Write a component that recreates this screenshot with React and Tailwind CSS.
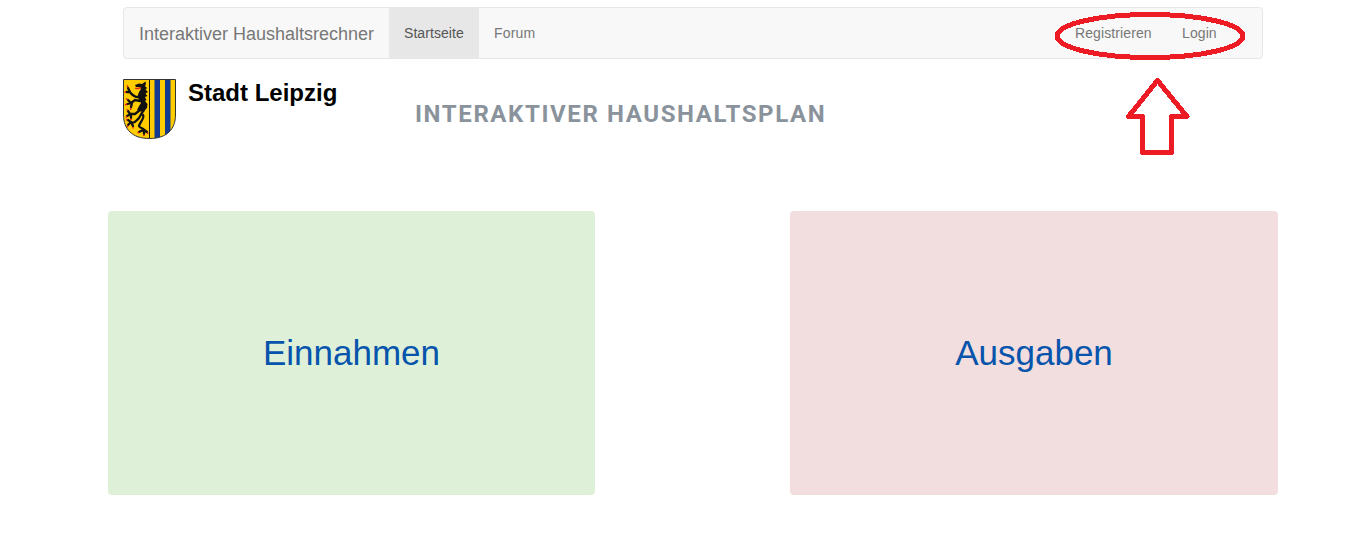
function CoatOfArms() {
  return (
    <svg className="h-[60px] w-[53px] shrink-0" viewBox="0 0 53 60">
      <defs>
        <clipPath id="shield">
          <path d="M.5 .5H52.5V36C52.5 50 44 59.500 26.500 59.500C9 59.500 .5 50 .5 36Z" />
        </clipPath>
      </defs>
      <g clipPath="url(#shield)">
        <rect width="53" height="60" fill="#fc0" />
        <path d="M31.500 0H37V60H31.500ZM42 0H47.500V60H42Z" fill="#123a91" />
        <path d="M26.500 0V60" stroke="#111" />
        <path
          d="M12 6L16 4.500L19 5L22.500 2.500L23 5L22 7L24 9L22.500 10.500L25 13L22.500 14.500L24.500 17L22 18L23.500 21L22 22L24.500 25L24 29L21 32L18 32.500L14 31L16 27L18 24L16 21L14.500 17L16 13L18 10L16.500 8L13 8Z"
          fill="#111"
        />
        <path
          d="M17 18C13 19 9 16 6 12M3.500 13L7 13M5 9L7 13M17 22L12 21L8 24M5 21L8 24M4.500 25L9 24M8 28L9 24M17 31L12 35L7 35M5 32L7 35M4 37L8 35M8 39L8 35M21 31C16 37 18 38 14 41C11 44 10 44 8 43M5 41L8 43M5 46L8 43M10 47L8 43M20 36C22 39 17 43 16 47C17 50 20 48 21 51M16 53L20 51M21 55L21 51M24 53L20 50"
          fill="none"
          stroke="#111"
          strokeWidth="2.300"
          strokeLinecap="round"
        />
        <path
          d="M12 9C14 10.500 16 9 18 8.500M5 8L4 6.500M3 13L1.500 13.500M4.500 20.500L3 19.500M4 25L2 26M8 29L7.500 31M5 31.500L3.500 30.500M4 37.500L2.500 38.500M8 39.500L8 41M4.500 41L3 40.500M5 46.500L4 48M10 48L10 49.500M16 53L14.500 54M21 55.500L21 57M24.500 53.500L25 55"
          fill="none"
          stroke="#e32a18"
          strokeWidth="1.500"
        />
      </g>
      <path
        d="M.5 .5H52.500V36C52.500 50 44 59.500 26.500 59.500C9 59.500 .5 50 .5 36Z"
        fill="none"
        stroke="#333"
      />
    </svg>
  );
}

function LoginHighlight() {
  return (
    <svg
      className="pointer-events-none absolute top-0 right-[14px] h-[152px] w-[196px]"
      viewBox="1052 8 196 152"
      fill="none"
      stroke="#ed1c24"
      strokeWidth="5"
      strokeLinejoin="round"
      shapeRendering="crispEdges"
    >
      <ellipse cx="1150" cy="36" rx="93" ry="21.500" />
      <path d="M1157.500 80.500L1187 116.500H1171.500V152.500H1142.500V116.500H1128.500Z" />
    </svg>
  );
}

function NavItem({ children, active, width }) {
  const tone = active ? "bg-[#e7e7e7] text-[#555]" : "text-[#777]";
  return (
    <a href="#" className={`flex h-[50px] items-center pl-[15px] ${width} ${tone}`}>
      {children}
    </a>
  );
}

export default function App() {
  return (
    <div className="min-h-[539px] bg-white pt-[7px] pl-[108px] font-['Liberation_Sans',Arial,sans-serif] text-[14px] text-[#333]">
      <div className="w-[1170px]">
        <nav className="relative mx-[15px] flex h-[52px] rounded-[4px] border border-[#e7e7e7] bg-[#f8f8f8]">
          <a href="#" className="flex w-[265px] items-center pt-[2px] pl-[15px] text-[18px] text-[#777]">
            Interaktiver Haushaltsrechner
          </a>
          <NavItem active width="w-[90px] tracking-[0.07px]">Startseite</NavItem>
          <NavItem width="w-[71px] tracking-[0.200px]">Forum</NavItem>
          <div className="mr-[30px] ml-auto flex">
            <NavItem width="w-[107px] tracking-[0.100px]">Registrieren</NavItem>
            <NavItem width="w-[65px] tracking-[0.100px]">Login</NavItem>
          </div>
          <LoginHighlight />
        </nav>
        <header className="flex h-[152px] items-start px-[15px] pt-[20px]">
          <CoatOfArms />
          <div className="w-[239px] pl-[12px] text-[24px] leading-[28px] font-bold text-black">
            Stadt Leipzig
          </div>
          <h1 className="pt-[19px] font-[Roboto,sans-serif] text-[24px] leading-[32px] font-bold tracking-[1.600px] whitespace-nowrap text-[#8a939c]">
            INTERAKTIVER HAUSHALTSPLAN
          </h1>
        </header>
        <main className="flex justify-between">
          <a
            href="#"
            className="flex h-[284px] w-[487px] items-center justify-center rounded-[4px] bg-[#dff0d8] pt-px text-[35px] text-[#0654ac]"
          >
            Einnahmen
          </a>
          <a
            href="#"
            className="flex h-[284px] w-[488px] items-center justify-center rounded-[4px] bg-[#f2dede] pt-px text-[35px] text-[#0654ac]"
          >
            Ausgaben
          </a>
        </main>
      </div>
    </div>
  );
}
